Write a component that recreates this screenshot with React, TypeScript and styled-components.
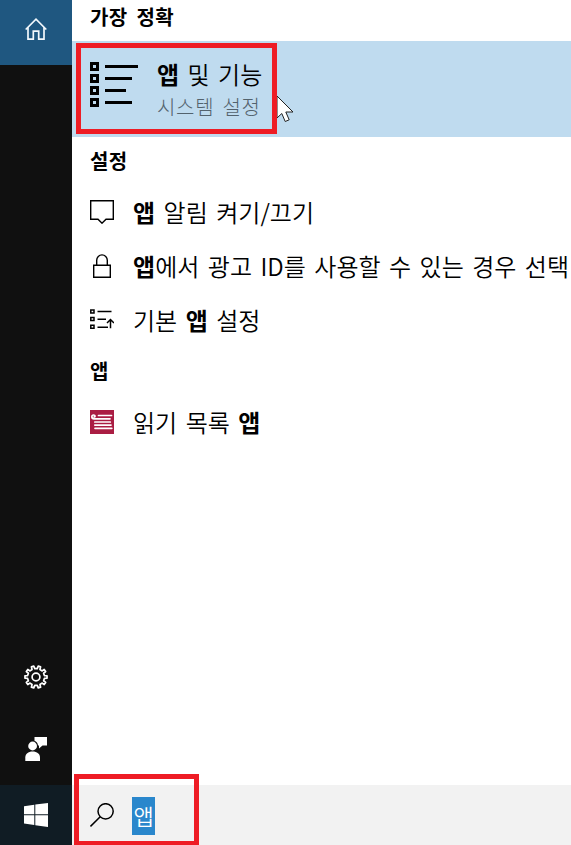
import React from 'react';
import styled, { createGlobalStyle } from 'styled-components';

const GlobalStyle = createGlobalStyle`
  * { box-sizing: border-box; }
  body {
    margin: 0;
    overflow: hidden;
    background: #fff;
    font-family: "Noto Sans CJK KR", "Noto Sans", sans-serif;
    color: #000;
  }
  svg { display: block; }
`;

const Screen = styled.div`
  position: relative;
  display: grid;
  grid-template-columns: 72px 1fr;
  width: 571px;
  height: 845px;
  overflow: hidden;
`;

const Sidebar = styled.nav`
  display: flex;
  flex-direction: column;
  background: #101010;
`;

const NavButton = styled.div<{ $height: number; $bg?: string; $push?: boolean; $lift?: number }>`
  display: flex;
  flex: none;
  align-items: center;
  justify-content: center;
  height: ${(p) => p.$height}px;
  margin-top: ${(p) => (p.$push ? 'auto' : '0')};
  padding-bottom: ${(p) => p.$lift ?? 0}px;
  background: ${(p) => p.$bg ?? 'transparent'};
`;

const Main = styled.main`
  display: flex;
  flex-direction: column;
  min-width: 0;
`;

const Heading = styled.h2<{ $first?: boolean }>`
  flex: none;
  margin: ${(p) => (p.$first ? '-7px' : '0')} 0 0;
  padding-left: 18px;
  height: 48px;
  line-height: 48px;
  font-size: 20px;
  font-weight: 700;
  letter-spacing: 0.4px;
  word-spacing: 4px;
  white-space: nowrap;
`;

const BestMatch = styled.div`
  display: flex;
  flex: none;
  height: 96px;
  padding: 21px 0 0 18px;
  background: #bfdbef;
`;

const BestText = styled.div`
  display: flex;
  flex-direction: column;
  margin: -4px 0 0 19px;
`;

const Label = styled.span`
  font-size: 24px;
  line-height: 32px;
  font-weight: 350;
  letter-spacing: 0.04px;
  word-spacing: 3px;
  white-space: nowrap;

  b { font-weight: 700; }
`;

const Caption = styled.span`
  font-size: 20px;
  line-height: 33px;
  font-weight: 300;
  letter-spacing: 0.7px;
  word-spacing: 3px;
  color: #53626d;
`;

const Row = styled.div`
  display: flex;
  flex: none;
  align-items: center;
  gap: 19px;
  height: 54px;
  padding-left: 18px;
`;

const SearchBar = styled.div`
  display: flex;
  flex: none;
  align-items: center;
  gap: 18px;
  height: 60px;
  margin-top: auto;
  padding-left: 18px;
  background: #f2f2f2;
`;

const Selection = styled.span`
  width: 23px;
  height: 38px;
  margin-top: 1px;
  font-size: 22px;
  line-height: 36px;
  font-weight: 350;
  text-align: center;
  color: #fff;
  background: #2a87cc;
`;

const Marker = styled.div<{ $x: number; $y: number; $w: number; $h: number }>`
  position: absolute;
  left: ${(p) => p.$x}px;
  top: ${(p) => p.$y}px;
  width: ${(p) => p.$w}px;
  height: ${(p) => p.$h}px;
  border: 5px solid #ee1c25;
`;

const Pointer = styled.svg`
  position: absolute;
  left: 276px;
  top: 94px;
`;

const HomeIcon = () => (
  <svg width="24" height="24" viewBox="0 0 24 24" fill="none" stroke="#f2f8fc" strokeWidth="1.7">
    <path d="M1.700 12.500 12 2.200l10.300 10.300M4 10.500v11.700h5.300v-8h5.400v8H20V10.500" />
  </svg>
);

const gearPath = (() => {
  const points: string[] = [];
  const teeth = 10;
  for (let i = 0; i < teeth; i++) {
    const shape: [number, number][] = [[-0.27, 8.5], [-0.18, 11.1], [0.18, 11.1], [0.27, 8.5]];
    for (const [offset, radius] of shape) {
      const a = ((i + 0.5 + offset) / teeth) * Math.PI * 2;
      points.push(`${(12 + radius * Math.sin(a)).toFixed(2)} ${(12 - radius * Math.cos(a)).toFixed(2)}`);
    }
  }
  return `M${points.join('L')}Z`;
})();

const GearIcon = () => (
  <svg width="24" height="24" viewBox="0 0 24 24" fill="none" stroke="#fff" strokeWidth="1.7" strokeLinejoin="round">
    <path d={gearPath} />
    <circle cx="12" cy="12" r="3.9" />
  </svg>
);

const FeedbackIcon = () => (
  <svg width="24" height="24" viewBox="0 0 24 24" fill="#fff">
    <path d="M10.500 0H23v8.500h-4.500L15 11.500V8.500H14C13.800 6 12.500 4.500 10.500 3.800Z" />
    <circle cx="8.600" cy="9" r="4.400" />
    <path d="M1.300 24v-3.500c0-3.500 2.800-6 7.300-6s7.400 2.500 7.400 6V24Z" />
  </svg>
);

const WindowsIcon = () => (
  <svg width="24" height="24" viewBox="0 0 24 24" fill="#fff">
    <path d="M0 3.300 10.300 1.800V11.300H0ZM11.300 1.600 24 0V11.300H11.300ZM0 12.300H10.300V22L0 20.600ZM11.300 12.300H24V24L11.300 22.300Z" />
  </svg>
);

const FeatureListIcon = () => (
  <svg width="48" height="46" viewBox="0 0 48 46" fill="none" stroke="#000" strokeWidth="3">
    {[48, 42, 36, 42].map((end, i) => (
      <path key={i} d={`M1.500 ${i * 12 + 1.5}h6v6h-6ZM15 ${i * 12 + 4.5}H${end}`} />
    ))}
  </svg>
);

const BubbleIcon = () => (
  <svg width="24" height="24" viewBox="0 0 24 24" fill="none" stroke="#000" strokeWidth="1.4">
    <path d="M.7.700h22.600v18.500H16l-4 4-4-4H.7Z" />
  </svg>
);

const LockIcon = () => (
  <svg width="24" height="24" viewBox="0 0 24 24" fill="none" stroke="#000" strokeWidth="1.4">
    <path d="M3.700 11.300h16.600v12H3.700ZM6.700 11V6.200a5.300 5.300 0 0 1 10.600 0V11" />
  </svg>
);

const DefaultsIcon = () => (
  <svg width="24" height="24" viewBox="0 0 24 24" fill="none" stroke="#000" strokeWidth="1.500">
    <path d="M.8 1.900h3.200v3H.8ZM.8 9.600h3.200v3H.8ZM.8 17.300h3.200v3H.8Z" />
    <path d="M7.500 3.500h14M7.500 11.300h8.500M7.500 19.300h10.500M20.500 20.300v-8.800M17 15l3.500-3.500L24 15" />
  </svg>
);

const ReadingListIcon = () => (
  <svg width="24" height="24" viewBox="0 0 24 24">
    <path fill="#aa1d43" d="M0 0h24v24H0z" />
    <path
      fill="none"
      stroke="#fff"
      strokeWidth="1.700"
      strokeLinecap="round"
      d="M8.500 5.500h13M7 8.800h13M4.800 12h15.500M4.800 15.100h16.200M5 18.300h16.800M7 8.800H4C1.200 8.700 1.300 5 3.600 5c1.800 0 1.800 1.900.6 1.900"
    />
  </svg>
);

const SearchIcon = () => (
  <svg width="24" height="24" viewBox="0 0 24 24" fill="none" stroke="#000" strokeWidth="1.500">
    <circle cx="15.600" cy="8.300" r="7.600" />
    <path d="M10.200 13.700.5 23.400" />
  </svg>
);

export default function App() {
  return (
    <>
      <GlobalStyle />
      <Screen>
        <Sidebar>
          <NavButton $height={65} $bg="#1f5780" $lift={7}><HomeIcon /></NavButton>
          <NavButton $height={72} $push><GearIcon /></NavButton>
          <NavButton $height={72}><FeedbackIcon /></NavButton>
          <NavButton $height={60} $bg="#101c24"><WindowsIcon /></NavButton>
        </Sidebar>
        <Main>
          <Heading $first>가장 정확</Heading>
          <BestMatch>
            <FeatureListIcon />
            <BestText>
              <Label><b>앱</b> 및 기능</Label>
              <Caption>시스템 설정</Caption>
            </BestText>
          </BestMatch>
          <Heading>설정</Heading>
          <Row><BubbleIcon /><Label><b>앱</b> 알림 켜기/끄기</Label></Row>
          <Row><LockIcon /><Label><b>앱</b>에서 광고 ID를 사용할 수 있는 경우 선택</Label></Row>
          <Row><DefaultsIcon /><Label>기본 <b>앱</b> 설정</Label></Row>
          <Heading>앱</Heading>
          <Row><ReadingListIcon /><Label>읽기 목록 <b>앱</b></Label></Row>
          <SearchBar>
            <SearchIcon />
            <Selection>앱</Selection>
          </SearchBar>
        </Main>
        <Pointer width="20" height="30" viewBox="0 0 20 30">
          <path d="M1 2v22l4.800-4.500 3.400 8 4-1.700-3.400-7.800H17Z" fill="#fff" stroke="#222" strokeWidth="1" />
        </Pointer>
        <Marker $x={76} $y={43} $w={201} $h={91} />
        <Marker $x={74} $y={774} $w={125} $h={72} />
      </Screen>
    </>
  );
}
